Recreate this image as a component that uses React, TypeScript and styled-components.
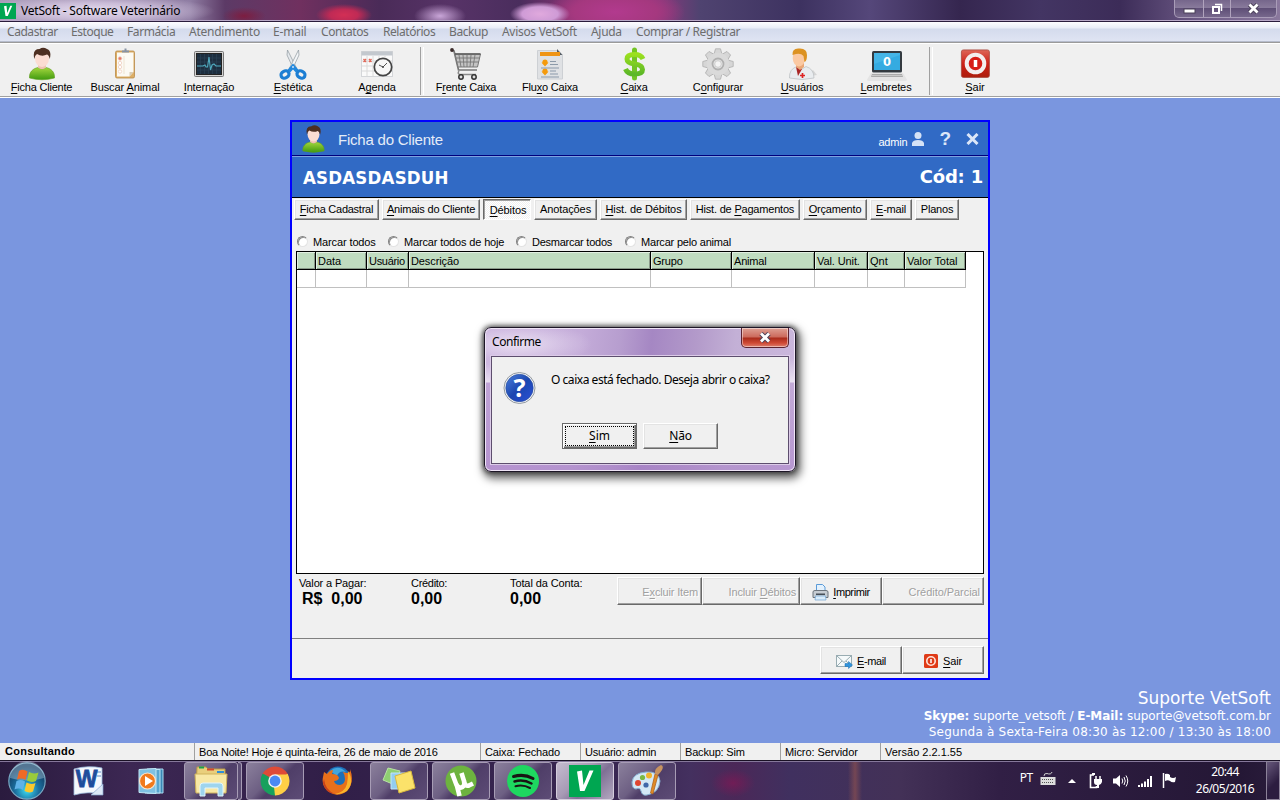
import React from 'react';
import styled, { createGlobalStyle, css } from 'styled-components';

const Global = createGlobalStyle`
  * { box-sizing: border-box; }
  html, body { margin: 0; padding: 0; }
  body { width: 1280px; height: 800px; overflow: hidden; font-family: "Liberation Sans", sans-serif; font-size: 11px; color: #000; }
  u { text-decoration: underline; text-underline-offset: 1.5px; text-decoration-thickness: 1px; text-decoration-skip-ink: none; }
  svg { display: block; flex: none; }
`;

const segoe = '"Noto Sans", "Open Sans", sans-serif';
const verdana = '"DejaVu Sans", sans-serif';

const Screen = styled.div`
  width: 1280px; height: 800px; display: flex; flex-direction: column; overflow: hidden; background: #7a96df;
`;

const Text = styled.span<{ $ls?: number }>`
  white-space: pre; letter-spacing: ${p => p.$ls ?? 0}px;
`;

/* "&" marks the letter that is the keyboard accelerator */
const Label = ({ text, ls }: { text: string; ls?: number }) => {
  const i = text.indexOf('&');
  if (i < 0) return <Text $ls={ls}>{text}</Text>;
  return <Text $ls={ls}>{text.slice(0, i)}<u>{text[i + 1]}</u>{text.slice(i + 2)}</Text>;
};

/* ---------- title bar ---------- */
const TitleBar = styled.header`
  height: 22px; flex: none; display: flex; align-items: flex-start; justify-content: space-between;
  border-bottom: 1px solid #2a1c3c; box-shadow: inset 0 -1px 0 #b9a9c8;
  font-family: ${segoe}; font-size: 12px; line-height: 22px;
  background:
    radial-gradient(ellipse 120px 16px at 95px 11px, rgba(236,228,244,.92) 0, rgba(214,200,226,.8) 50%, transparent 100%),
    radial-gradient(ellipse 26px 12px at 440px 16px, #c9a6d8 0, transparent 100%),
    radial-gradient(ellipse 22px 9px at 244px 16px, #7d1d40 0, transparent 100%),
    radial-gradient(ellipse 28px 11px at 344px 15px, #d32f55 0, #c02a55 50%, transparent 100%),
    radial-gradient(ellipse 30px 12px at 540px 14px, #e0a9dd 0, #cf9bd6 60%, transparent 100%),
    radial-gradient(ellipse 70px 26px at 615px 12px, #b23a8e 0, #a5387f 60%, transparent 100%),
    linear-gradient(90deg, #a99bb8 0, #8f7da3 190px, #5c3a66 225px, #70305f 300px, #4a2b58 380px, #573367 450px, #4a2d5d 520px, #8e3478 580px, #92367e 650px, #4f4370 700px, #3d3260 800px, #55477a 870px, #35264f 960px, #433563 1040px, #3c2c58 1120px, #6d5a86 1200px, #8a789d 1280px);
`;
const AppName = styled.div`
  display: flex; align-items: flex-start; gap: 5px; padding-top: 0;
  svg { margin-top: 3px; }
`;
const Caption = styled.div`
  display: flex; width: 103px; height: 18px; margin-right: 3px; border: 1px solid #a99cb8; border-top: 0;
  border-radius: 0 0 5px 5px; background: linear-gradient(#75668b, #887a9b 45%, #5f4f77 50%, #76678c);
`;
const CaptionBtn = styled.div<{ $w: number }>`
  width: ${p => p.$w}px; display: flex; justify-content: center; align-items: center;
  & + & { border-left: 1px solid #b0a3bd; }
`;
const VLogo = ({ size }: { size: number }) => (
  <svg width={size} height={size} viewBox="0 0 32 32">
    <rect width="32" height="32" fill="#00a651" />
    <path d="M8 6.500L13 5.500L14.500 20L20.500 5.500H24.500L15.500 26H11Z" fill="#fff" />
  </svg>
);

/* ---------- menu ---------- */
const MenuBar = styled.nav`
  height: 20px; flex: none; display: flex; padding-left: 7px; border-bottom: 1px solid #b6bccc;
  background: linear-gradient(#fdfdff 0, #e9edf7 6px, #d4dbed 7px, #dfe4f3 19px);
  font-family: ${segoe}; font-size: 12px; line-height: 20px; color: #6d6d6d;
`;
const MenuItem = styled.div<{ $w: number }>`width: ${p => p.$w}px; flex: none;`;
const menu: [string, number, number][] = [
  ['Cadastrar', 64, -0.45], ['Estoque', 56, -0.45], ['Farmácia', 62, -0.4], ['Atendimento', 84, -0.25], ['E-mail', 48, -0.2],
  ['Contatos', 62, -0.4], ['Relatórios', 66, -0.45], ['Backup', 53, -0.4], ['Avisos VetSoft', 89, -0.3], ['Ajuda', 45, -0.3],
  ['Comprar / Registrar', 130, -0.4],
];

/* ---------- toolbar ---------- */
const Toolbar = styled.div`
  height: 56px; flex: none; display: flex; margin-left: 0; padding: 0;
  border-top: 1px solid #9a9a9a; border-bottom: 1px solid #fff;
  box-shadow: inset 0 1px 0 #fff, inset 0 -1px 0 #a0a0a0; background: #f0f0f0;
`;
const Tool = styled.button<{ $first?: boolean }>`
  width: ${p => (p.$first ? 83 : 84)}px; flex: none; border: 0; background: none; padding: 4px 0 0;
  display: flex; flex-direction: column; align-items: center; font: 11px "Liberation Sans", sans-serif; color: #000;
  svg { height: 34px; }
  span { line-height: 14px; margin-top: -1px; }
`;
const ToolSep = styled.div`
  width: 5px; flex: none; margin: 4px 0 2px; display: flex; justify-content: flex-end;
  &::before { content: ""; width: 2px; border-left: 1px solid #a0a0a0; border-right: 1px solid #fff; }
`;

const Person = ({ w = 34, h = 34 }: { w?: number; h?: number }) => (
  <svg width={w} height={h} viewBox="0 0 34 34">
    <defs><linearGradient id="shirt" x2="0" y2="1"><stop stopColor="#a4d63e" /><stop offset="1" stopColor="#3f9a0f" /></linearGradient></defs>
    <path d="M4.500 31C4 25 8 21.500 13 20.500L17 22L21 20.500C26 21.500 30 25 29.500 31Q17 34.500 4.500 31Z" fill="url(#shirt)" stroke="#5f9e1f" strokeWidth=".6" />
    <path d="M13 16H21V20.500Q17 24 13 20.500Z" fill="#eec3b4" />
    <ellipse cx="17" cy="11.500" rx="7" ry="8.500" fill="#fbdcd2" />
    <path d="M9.300 12Q7 2 14.500 2Q18-.5 22 2Q27 4 24.700 12Q24 8 22 7.500Q17 10 12 7Q10 8 9.300 12Z" fill="#4d2f22" />
  </svg>
);
const Clipboard = () => (
  <svg width="34" height="34" viewBox="0 0 34 34">
    <rect x="7.500" y="4" width="19" height="27" rx="1.500" fill="#dcae66" stroke="#b98a48" strokeWidth=".8" />
    <path d="M9 5.500H25.500V25L21.500 29.500H9Z" fill="#fcfaf4" />
    <path d="M21.500 29.500V25H25.500Z" fill="#d9cdb5" />
    <path d="M14 5.500V3.500H16.500V1.500H18.500V3.500H21V5.500Z" fill="#8893a4" />
    <g fill="#fff" stroke="#efcfc0" strokeWidth=".8"><circle cx="12" cy="11.500" r="1.800" fill="#e77868" /><circle cx="12" cy="16" r="1.700" /><circle cx="12" cy="20" r="1.700" /><circle cx="12" cy="24.500" r="1.700" /></g>
    <path d="M16 9V27" stroke="#eee4d2" />
  </svg>
);
const Monitor = () => (
  <svg width="34" height="34" viewBox="0 0 34 34">
    <rect x="2.500" y="4.500" width="29" height="25" rx="1" fill="#d4d4d4" stroke="#777" />
    <rect x="4.500" y="6.500" width="25" height="21" fill="#1d2e3f" stroke="#222" />
    <path d="M8.500 7V27M12.500 7V27M16.500 7V27M20.500 7V27M24.500 7V27M5 11H29M5 15H29M5 19H29M5 23H29" stroke="#2c4459" strokeWidth=".6" />
    <path d="M5 19H11L13 18L14 20H15.500L17 10L18.500 23L20 18L22 17L24 19H29" fill="none" stroke="#4fa9bd" strokeWidth="1.100" />
  </svg>
);
const Scissors = () => (
  <svg width="34" height="34" viewBox="0 0 34 34">
    <path d="M11.500 3L20.500 21L17.500 22L11 8Z" fill="#e5e9ed" stroke="#8d969e" strokeWidth=".7" />
    <path d="M22.500 3L13.500 21L16.500 22L23 8Z" fill="#f4f6f8" stroke="#8d969e" strokeWidth=".7" />
    <path d="M13 24L17 19.500L21 24" fill="none" stroke="#2288dd" strokeWidth="4" />
    <g fill="none" stroke="#1c7ed3" strokeWidth="3.200"><ellipse cx="9" cy="27.500" rx="4.200" ry="3.400" transform="rotate(-30 9 27.500)" /><ellipse cx="25" cy="27.500" rx="4.200" ry="3.400" transform="rotate(30 25 27.500)" /></g>
    <circle cx="17" cy="20" r="1" fill="#cfe3f5" />
  </svg>
);
const Agenda = () => (
  <svg width="34" height="34" viewBox="0 0 34 34">
    <rect x="1.500" y="4.500" width="31" height="25" fill="#fafafa" stroke="#d4d6d9" />
    <rect x="1.500" y="4.500" width="31" height="4" fill="#c3c8ce" />
    <path d="M7 9V29M13 9V29M19 9V29M25 9V29M2 14H32M2 19H32M2 24H32" stroke="#dadada" />
    <path d="M3.500 12L6 15M6 12L3.500 15M9 12L11.500 15M11.500 12L9 15" stroke="#e06a5c" strokeWidth="1.300" />
    <circle cx="23" cy="20" r="8.700" fill="#f7f7f7" stroke="#444" strokeWidth="1.700" />
    <path d="M23 20L27 16M23 20L19 18" stroke="#555" strokeWidth="1" /><circle cx="23" cy="20" r="1" fill="#444" />
  </svg>
);
const Cart = () => (
  <svg width="34" height="34" viewBox="0 0 34 34">
    <path d="M2 3L5 4L9.500 23H28" fill="none" stroke="#777" strokeWidth="1.700" />
    <circle cx="3" cy="3" r="1.900" fill="#3b2c2c" />
    <path d="M6 7H31.500L28.500 20H9Z" fill="#c4c4c4" stroke="#777" />
    <path d="M10 8L12 20M14 8L15 20M18 8V20M22 8L21 20M26 8L24 20M7 11H31M8 15H30" stroke="#777" strokeWidth=".9" />
    <path d="M6 7H31.500" stroke="#555" strokeWidth="1.400" />
    <path d="M10 24Q8 27 11 27.500H27" fill="none" stroke="#8a8a8a" strokeWidth="1.500" />
    <g fill="#ddd" stroke="#333" strokeWidth="1.500"><circle cx="12" cy="30" r="2.200" /><circle cx="25" cy="30" r="2.200" /></g>
  </svg>
);
const Flow = () => (
  <svg width="34" height="34" viewBox="0 0 34 34">
    <path d="M4.500 3.500H25L29.500 8V32H4.500Z" fill="#dfe1e4" stroke="#cdd0d4" />
    <path d="M24 2L29.500 8H24Z" fill="#555c63" /><rect x="7" y="5" width="20" height="4" fill="#ef9414" />
    <g fill="#f59a0c"><circle cx="12" cy="15" r="2.600" /><path d="M8.500 15.500H15.500L12 19.500Z" /><circle cx="12" cy="24" r="2.600" /><path d="M8.500 24.500H15.500L12 28.500Z" /></g>
    <path d="M17 14.500H23M17 17.500H25M8 21H26M17 24H23M17 27H25M8 30H26" stroke="#8c9aa9" strokeWidth="1.200" />
  </svg>
);
const Dollar = () => (
  <svg width="34" height="34" viewBox="0 0 34 34">
    <defs><linearGradient id="money" x2="0" y2="1"><stop stopColor="#9be01f" /><stop offset="1" stopColor="#5cb727" /></linearGradient></defs>
    <path d="M17.500 3V31" stroke="#73c425" strokeWidth="5" strokeLinecap="round" />
    <path d="M26 12Q24 7.500 17.500 7.500Q10 7.500 10 12Q10 16 17.500 17Q25.500 18 25.500 22.500Q25.500 27 17.500 27Q10.500 27 8.500 22" fill="none" stroke="url(#money)" strokeWidth="5" />
  </svg>
);
const Gear = () => (
  <svg width="34" height="34" viewBox="0 0 34 34">
    <g fill="#d6d6d6" stroke="#adadad" strokeWidth=".8">
      {[0, 45, 90, 135, 180, 225, 270, 315].map(a => <path key={a} d="M12.800 8L14.500 1.800H19.500L21.200 8Z" transform={`rotate(${a} 17 17)`} />)}
    </g>
    <circle cx="17" cy="17" r="11.300" fill="#dadada" />
    <circle cx="17" cy="17" r="5.500" fill="#e6e6e6" stroke="#b0b0b0" strokeWidth="1.800" />
    <circle cx="17" cy="17" r="3.300" fill="#f4f4f4" stroke="#b5b5b5" strokeWidth=".6" />
  </svg>
);
const Doctor = () => (
  <svg width="34" height="34" viewBox="0 0 34 34">
    <path d="M20 30L32 28L28 23Z" fill="#d5d5d5" />
    <path d="M4.500 31Q4 22 12 19.500L17 22L21 19.500Q29 22 29 31Q17 34 4.500 31Z" fill="#e9ecef" stroke="#b7bbbf" strokeWidth=".7" />
    <path d="M11 20L13 29L17 22Z" fill="#a92626" />
    <path d="M11 15H19V20L15 23L11 20Z" fill="#eaa777" />
    <ellipse cx="14" cy="11" rx="6.300" ry="8.500" fill="#fbc9a2" />
    <path d="M7.500 8Q7 1 14 1.500Q22 1 22 8Q22 14 19.500 15L18.500 9Q16 6 11 7Z" fill="#dc9222" />
    <path d="M15 28.500H20M17.500 26V31" stroke="#d22" strokeWidth="1.700" />
  </svg>
);
const Laptop = () => (
  <svg width="42" height="34" viewBox="0 0 42 34">
    <rect x="7" y="4" width="30" height="21.500" rx="1.500" fill="#333a40" />
    <rect x="9" y="6" width="26" height="17" fill="#45b5e6" />
    <path d="M9 23V17L35 8V23Z" fill="#219fdb" opacity=".45" />
    <path d="M6 26H38L42 32.500Q42 34 40 34H4Q2 34 2 32.500Z" fill="#e4e4e4" /><path d="M7 27H37L38 30H6Z" fill="#aaa" /><path d="M7 28.500H37.500" stroke="#ddd" strokeWidth=".6" />
    <text x="22" y="18.500" textAnchor="middle" fontFamily="DejaVu Sans" fontWeight="700" fontSize="11.500" fill="#fff">0</text>
  </svg>
);
const Power = () => (
  <svg width="34" height="34" viewBox="0 0 34 34">
    <defs><linearGradient id="pw" x2="0" y2="1"><stop stopColor="#de6658" /><stop offset=".5" stopColor="#cc2118" /><stop offset="1" stopColor="#ad1c0c" /></linearGradient></defs>
    <rect x="3.400" y="2.900" width="28" height="27.500" rx="2" fill="url(#pw)" stroke="#a8453b" strokeWidth=".8" />
    <circle cx="17.500" cy="16.500" r="8.800" fill="#d71c16" stroke="#f3eeee" strokeWidth="4" />
    <path d="M17.500 13V20" stroke="#fff" strokeWidth="3.500" />
  </svg>
);
type ToolDef = [string, React.ReactNode, number];
const tools: ToolDef[][] = [
  [['&Ficha Cliente', <Person />, -0.22], ['Buscar &Animal', <Clipboard />, -0.1], ['&Internação', <Monitor />, -0.15], ['&Estética', <Scissors />, -0.05], ['A&genda', <Agenda />, -0.1]],
  [['F&rente Caixa', <Cart />, -0.2], ['Flu&xo Caixa', <Flow />, -0.2], ['&Caixa', <Dollar />, -0.2], ['C&onfigurar', <Gear />, -0.1], ['&Usuários', <Doctor />, -0.1], ['&Lembretes', <Laptop />, -0.1]],
  [['&Sair', <Power />, 0]],
];

/* ---------- desktop area ---------- */
const Desktop = styled.main`
  height: 645px; flex: none; display: flex; flex-direction: column; align-items: center; padding-top: 22px; background: #7a96df;
`;
const Window = styled.section`
  width: 700px; height: 560px; flex: none; border: 2px solid #0000ff; background: #f0f0f0; display: flex; flex-direction: column;
`;
const WinHead = styled.div`
  height: 35px; flex: none; display: flex; align-items: center; padding: 0 9px 0 7px; background: #316ac5; color: #e4ecf8;
  border-bottom: 1px solid #7ea2e0; box-shadow: inset 0 -1px 0 #00007c;
`;
const WinTitle = styled.div`flex: 1; padding: 1px 0 0 10px; font-size: 15px;`;
const UserTag = styled.div`
  display: flex; align-items: center; gap: 5px; color: #fff; font-size: 11px; margin-right: 15px;
  span { padding-top: 5px; }
`;
const HeadGlyph = styled.div<{ $gap: number }>`margin-right: ${p => p.$gap}px; font: bold 19px "Liberation Sans", sans-serif; color: #dbe6f8;`;
const NameBar = styled.div`
  height: 41px; flex: none; display: flex; justify-content: space-between; padding: 0 5px 0 11px; background: #316ac5; color: #fff;
  border-bottom: 1px solid #000; font: bold 18px/40px ${verdana};
`;
const ClientName = styled.div`font-family: "DejaVu Sans Condensed", "DejaVu Sans", sans-serif; font-stretch: condensed; font-size: 18.5px; padding-top: 1px;`;
const raised = css`
  border: 1px solid; border-color: #fff #696969 #696969 #fff; box-shadow: inset -1px -1px 0 #a0a0a0, inset 1px 1px 0 #e3e3e3; background: #f0f0f0;
`;
const Tabs = styled.div`display: flex; height: 24px; flex: none; padding: 1px 0 0 2px; gap: 3px;`;
const Tab = styled.button<{ $w: number; $on?: boolean }>`
  width: ${p => p.$w}px; height: 21px; padding: 0; font: 11px/17px "Liberation Sans", sans-serif; color: #000; text-align: center; ${raised}
  ${p => p.$on && css`border-color: #696969 #fff #fff #696969; box-shadow: inset 1px 1px 0 #a0a0a0; background: repeating-conic-gradient(#fff 0 25%, #f0f0f0 0 50%) 0 0 / 2px 2px; padding: 2px 0 0 2px;`}
`;
const tabs: [string, number, number, boolean?][] = [
  ['&Ficha Cadastral', 85, -0.25], ['&Animais do Cliente', 98, -0.2], ['&Débitos', 48, -0.1, true], ['Anotações', 63, -0.1], ['&Hist. de Débitos', 87, -0.1],
  ['Hist. de &Pagamentos', 110, -0.2], ['&Orçamento', 64, -0.2], ['&E-mail', 42, -0.2], ['Planos', 44, -0.2],
];
const Radios = styled.div`display: flex; height: 29px; flex: none; padding: 9px 0 0 5px; line-height: 22px;`;
const Radio = styled.label<{ $w: number }>`display: flex; align-items: center; gap: 5px; width: ${p => p.$w}px; flex: none; height: 22px;`;
const Dot = styled.i`
  width: 11px; height: 11px; margin-bottom: 1px; border-radius: 50%; background: #fff; border: 1px solid; border-color: #808080 #e3e3e3 #e3e3e3 #808080; box-shadow: inset 1px 1px 0 #8f8f8f;
`;
const GridBox = styled.div`
  width: 688px; height: 323px; flex: none; margin-left: 4px; border: 1px solid #000; background: #fff; display: flex; flex-direction: column;
`;
const GridRow = styled.div`display: flex;`;
const Th = styled.div<{ $w: number }>`
  width: ${p => p.$w}px; height: 18px; padding-left: 2px; background: #c0dcc0; border-right: 1px solid #000; border-bottom: 1px solid #000;
  box-shadow: inset 1px 1px 0 #e2efe2, inset -1px -1px 0 #8a9a8a; line-height: 18px; overflow: hidden; white-space: nowrap;
`;
const Td = styled.div<{ $w: number }>`width: ${p => p.$w}px; height: 18px; border-right: 1px solid #c0c0c0; border-bottom: 1px solid #c0c0c0;`;
const cols: [string, number, number][] = [
  ['', 19, 0], ['Data', 51, 0], ['Usuário', 42, -0.3], ['Descrição', 242, -0.1], ['Grupo', 81, -0.2], ['Animal', 83, -0.2], ['Val. Unit.', 53, -0.1], ['Qnt', 37, 0], ['Valor Total', 61, -0.05],
];
const Totals = styled.div`display: flex; height: 65px; flex: none; padding: 3px 4px 0 7px; border-bottom: 1px solid #808080;`;
const Total = styled.div<{ $w: number }>`
  width: ${p => p.$w}px; display: flex; flex-direction: column; line-height: 12px;
  b { font-size: 16px; line-height: 20px; white-space: pre; }
`;
const Currency = styled.b`padding-left: 3px;`;
const Actions = styled.div`display: flex; justify-content: flex-end; `;
const Action = styled.button<{ $w: number; $off?: boolean; $align?: string; $gap?: number }>`
  width: ${p => p.$w}px; height: 28px; flex: none; display: flex; align-items: center; justify-content: ${p => p.$align ?? 'center'}; gap: ${p => p.$gap ?? 4}px;
  padding: 2px 3px 0; font: 11px "Liberation Sans", sans-serif; ${raised} color: ${p => (p.$off ? '#a0a0a0' : '#000')};
  ${p => p.$off && 'text-shadow: 1px 1px 0 #fff;'}
`;
const Footer = styled.div`display: flex; justify-content: flex-end; padding: 7px 4px 0 0;`;

const Support = styled.aside`
  align-self: stretch; text-align: right; color: #fff; font: 12px/16px ${verdana}; padding: 8px 9px 0 0; 
  p { margin: 0; }
  p:first-child { font-size: 17px; line-height: 20px; }
`;

/* ---------- confirmation dialog ---------- */
const Dialog = styled.div`
  position: absolute; left: 484px; top: 327px; width: 312px; height: 145px; border: 1px solid #1d1626; border-radius: 7px; padding: 0 7px 7px;
  display: flex; flex-direction: column; box-shadow: 2px 4px 9px 3px rgba(0,0,0,.55), 0 0 5px 1px rgba(0,0,0,.6), inset 0 0 0 1px #efe4f6;
  background:
    radial-gradient(ellipse 75px 22px at 32px 16px, rgba(240,232,246,.85), transparent),
    linear-gradient(transparent 30px, rgba(255,255,255,.6) 54px, rgba(180,145,205,.35) 55px, rgba(170,130,200,.6) 100%),
    linear-gradient(95deg, #c6addb 0, #c4acd9 30%, #b79ecf 42%, #a587c3 52%, #b39aca 66%, #c3b0d6 78%, #cbb8dd 100%);
`;
const DlgTitle = styled.div`
  height: 28px; flex: none; display: flex; justify-content: space-between; font: 12px/28px ${segoe};
`;
const DlgClose = styled.div`
  width: 48px; height: 20px; margin: 0 -1px 0 0; border: 1px solid #5b2430; border-top: 0; border-radius: 0 0 5px 5px; display: flex; align-items: center; justify-content: center;
  box-shadow: inset 0 0 0 1px rgba(255,255,255,.45); background: linear-gradient(#dea094 0, #cc6a5c 9px, #a92c1c 10px, #cf4934 15px, #dd8070 100%);
`;
const DlgBody = styled.div`
  flex: 1; border: 1px solid #5d4e6e; outline: 1px solid #dccbe8; background: #f0f0f0; display: flex; flex-direction: column; margin: 0 -1px 0 -1px;
  font: 12px ${segoe};
`;
const Message = styled.div`
  display: flex; height: 66px; padding: 14px 0 0 11px; gap: 15px;
  & > span { line-height: 20px; margin-top: -1px; }
`;
const DlgButtons = styled.div`display: flex; gap: 6px; padding-left: 70px;`;
const DlgButton = styled.button<{ $def?: boolean }>`
  width: 75px; height: 26px; padding: 0; font: 12px/20px ${segoe}; display: flex; align-items: center; justify-content: center; ${raised}
  ${p => p.$def && css`border-color: #696969; box-shadow: inset 1px 1px 0 #fff, inset -1px -1px 0 #696969, inset -2px -2px 0 #a0a0a0; & > span { border: 1px dotted #000; width: 69px; height: 20px; line-height: 18px; }`}
`;

/* ---------- status bar ---------- */
const Status = styled.footer`height: 17px; flex: none; display: flex; background: #f0f0f0; line-height: 18px;`;
const Pane = styled.div<{ $w: number; $bold?: boolean }>`
  width: ${p => p.$w}px; padding-left: ${p => (p.$bold ? 5 : 4)}px; flex: none; font-weight: ${p => (p.$bold ? 700 : 400)}; 
  line-height: ${p => (p.$bold ? 16 : 18)}px;
  & + & { border-left: 1px solid #a0a0a0; }
`;
const panes: [string, number, number][] = [
  ['Consultando', 194, 0.25], ['Boa Noite! Hoje é quinta-feira, 26 de maio de 2016', 286, -0.18], ['Caixa: Fechado', 100, -0.15], ['Usuário: admin', 100, -0.2],
  ['Backup: Sim', 100, -0.18], ['Micro: Servidor', 100, -0.08], ['Versão 2.2.1.55', 400, 0],
];

/* ---------- taskbar ---------- */
const Taskbar = styled.div`
  height: 40px; flex: none; display: flex; border-top: 1px solid #1a1125; box-shadow: inset 0 1px 0 #85779a; color: #fff; font-family: ${segoe};
  background:
    radial-gradient(ellipse 22px 14px at 733px 22px, rgba(125,25,85,.75), transparent),
    linear-gradient(90deg, transparent 848px, rgba(150,85,80,.6) 855px, transparent 862px),
    linear-gradient(90deg, #2a1b3e 0, #3c2753 130px, #311f48 330px, #3a2753 640px, #44305f 690px, #4b2858 735px, #40305f 790px, #433157 900px, #311f45 1000px, #241735 1240px, #2a1c3b 1280px);
`;
const Task = styled.div<{ $w: number; $open?: boolean; $active?: boolean }>`
  width: ${p => p.$w}px; height: 38px; margin: 1px 4px 0 0; flex: none; display: flex; align-items: center; justify-content: center; border-radius: 3px;
  ${p => p.$open && css`border: 1px solid #a79cb5; background: linear-gradient(135deg, #8b809c 0, #6d5f83 42%, #4f3e68 55%, #5d4c76 100%);`}
  ${p => p.$active && css`border-color: #d5cddd; background: linear-gradient(135deg, #c5bccf 0, #a79ab5 40%, #7f7095 60%, #b3a8c0 100%);`}
`;
const Stack = styled.div`width: 4px; height: 38px; margin: 1px 4px 0 -4px; flex: none; border: 1px solid #a79cb5; border-left: 0; border-radius: 0 3px 3px 0; background: #5c4d74;`;
const Tray = styled.div`margin-left: auto; display: flex; align-items: center; flex: none;`;
const Lang = styled.div`font-size: 12px; line-height: 14px; margin: 0 7px 6px 0;`;
const TrayIcon = styled.div<{ $gap: number; $lift?: number }>`margin: 0 ${p => p.$gap}px ${p => p.$lift ?? 0}px 0;`;
const Clock = styled.div`width: 62px; margin-right: 10px; text-align: center; font-size: 12px; line-height: 17px; padding-bottom: 1px;`;
const Peek = styled.div`width: 14px; height: 39px; border: 1px solid #8c8299; background: linear-gradient(135deg, #67587b, #2c1d40 60%);`;

const Orb = () => (
  <svg width="40" height="40" viewBox="0 0 40 40">
    <defs><radialGradient id="orb" cx=".5" cy=".75" r=".65"><stop stopColor="#3fe0f5" /><stop offset=".5" stopColor="#1b6f9f" /><stop offset="1" stopColor="#12395f" /></radialGradient></defs>
    <circle cx="20" cy="20" r="18.200" fill="url(#orb)" stroke="#79a9c4" strokeWidth="1.200" />
    <path d="M3 17A17 17 0 0 1 37 17Q20 22 3 17Z" fill="#b9d3e2" opacity=".4" />
    <path d="M12 10Q16 7.500 20.500 10.500L18.500 19Q14.500 16.500 10 18.500Z" fill="#ee6a26" />
    <path d="M22 11Q26.500 13.500 31.500 11.500L29 20Q24.500 22 20 19.500Z" fill="#9bcb3a" />
    <path d="M9.500 20Q14 18 18 20.500L16 29Q12 26.500 7.500 28.500Z" fill="#5fb2e8" />
    <path d="M19.500 21.500Q24 24 28.500 22L26 30.500Q22 32.500 17.500 30Z" fill="#fbc82c" />
  </svg>
);
const Word = () => (
  <svg width="32" height="32" viewBox="0 0 32 32">
    <path d="M2 4Q16 0 30 3V29Q16 26 2 30Z" fill="#f4f8fd" stroke="#9dbbdd" strokeWidth=".8" />
    <path d="M25 7H29M25 11H29" stroke="#5d89c4" />
    <text x="14.500" y="22" textAnchor="middle" fontFamily="Liberation Sans" fontWeight="700" fontSize="23" fill="#1d4d9c" stroke="#1d4d9c" strokeWidth=".8">W</text>
    <path d="M19 30L31 19V30Z" fill="#dce9f7" stroke="#87a8cf" strokeWidth=".7" />
  </svg>
);
const Media = () => (
  <svg width="32" height="32" viewBox="0 0 32 32">
    <path d="M12 4H28V28H12Z" fill="#3a87b5" stroke="#a9dbf1" /><path d="M10 4.500H25V28H10Z" fill="#57a5cf" stroke="#bce5f6" />
    <path d="M4 4.500L21 3.500V28.500L4 27.500Z" fill="#7fc1e2" stroke="#c3e8f6" />
    <circle cx="12.500" cy="16" r="8" fill="#f17a1c" stroke="#fbe5cf" strokeWidth="1.200" /><path d="M10 11L18 16L10 21Z" fill="#fff" />
  </svg>
);
const Explorer = () => (
  <svg width="36" height="34" viewBox="0 0 36 34">
    <path d="M4 3H13L15 5H32V28H3Z" fill="#e9cf7c" stroke="#b99a49" /><path d="M6 3.500H11" stroke="#1ca24c" strokeWidth="2" /><path d="M14 5.500H21" stroke="#d44b2b" strokeWidth="2" /><path d="M24 8H31" stroke="#2f8fd8" strokeWidth="2" />
    <path d="M2 10H34L33 29H3Z" fill="#f8e8a5" stroke="#cfb25c" />
    <path d="M7 32V22Q7 19 10 19H27Q30 19 30 22V32H25V24H12V32Z" fill="#9fd5ee" stroke="#e2f5fc" />
  </svg>
);
const Chrome = () => (
  <svg width="30" height="30" viewBox="0 0 30 30">
    <path d="M15 15L2.500 7.800A14.500 14.500 0 0 1 27.600 7.800Z" fill="#df4b37" /><path d="M15 15L2.500 7.800A14.500 14.500 0 0 0 15 29.500Z" fill="#17a05d" /><path d="M15 15L27.600 7.800A14.500 14.500 0 0 1 15 29.500Z" fill="#ffcf45" />
    <path d="M15 8.500H28L21 19Z" fill="#ffcf45" /><path d="M9.500 18.500L2.700 7.500L9 11Z" fill="#17a05d" /><path d="M15 29.500L21 18L14 21Z" fill="#ffcf45" />
    <circle cx="15" cy="15" r="6.800" fill="#f2f2f2" /><circle cx="15" cy="15" r="5.400" fill="#4a89f3" />
  </svg>
);
const Firefox = () => (
  <svg width="32" height="32" viewBox="0 0 32 32">
    <circle cx="17" cy="14" r="12.500" fill="#1d6fb8" /><path d="M9 6Q17-1 25 7Q18 5 16 11Z" fill="#43a6dd" />
    <path d="M3 7L6 9Q9 5 12 5L11 9Q17 9 18 13Q17 16 13 16Q14 20 19 20Q24 19 24 14Q24 10 22 7Q30 10 29 4Q34 17 26 26Q17 33 8 27Q0 21 2 12Z" fill="#e8701a" />
    <path d="M27 6Q34 17 26 26Q20 30 14 29Q24 27 26 19Q27 14 27 6Z" fill="#fbb52a" /><path d="M3 14Q4 25 14 29Q4 28 2 18Z" fill="#c5401b" />
  </svg>
);
const Notes = () => (
  <svg width="36" height="32" viewBox="0 0 36 32">
    <path d="M7 3L19 6L14 20L2 15Z" fill="#8fcf72" stroke="#b9e3a5" /><path d="M10 8L24 8V24H10Z" fill="#93cdf1" stroke="#c3e5f8" /><path d="M14 11L30 6L34 23L18 28Z" fill="#fbe26a" stroke="#d9b93e" />
  </svg>
);
const UTorrent = () => (
  <svg width="32" height="32" viewBox="0 0 32 32">
    <circle cx="16" cy="16" r="15.500" fill="#6db33f" />
    <path d="M7 8L11.500 20Q14 24 17.500 22Q20 20.500 19 16L16.500 8M19 16Q20 22 24 20.500L28 18.500M11.500 19L14.500 31" fill="none" stroke="#fff" strokeWidth="4.600" />
  </svg>
);
const Spotify = () => (
  <svg width="32" height="32" viewBox="0 0 32 32">
    <circle cx="16" cy="16" r="16" fill="#1ed760" />
    <g fill="none" stroke="#191414" strokeLinecap="round"><path d="M6.500 11.500Q17 8.500 26 13.500" strokeWidth="3" /><path d="M7.500 16.500Q16.500 14 24.500 18.500" strokeWidth="2.500" /><path d="M8.500 21.300Q16 19.300 23 23" strokeWidth="2" /></g>
  </svg>
);
const Paint = () => (
  <svg width="34" height="34" viewBox="0 0 34 34">
    <path d="M2 18Q3 9 16 8Q29 7 30 17Q29 29 17 31Q12 32 11 27Q10 23 6 25Q2 25 2 18Z" fill="#d4e8f5" stroke="#86afd0" />
    <circle cx="8" cy="19" r="3" fill="#df4630" /><circle cx="12.500" cy="13.500" r="2.600" fill="#79b943" /><circle cx="19" cy="11.500" r="3" fill="#f2b42c" /><circle cx="16" cy="21" r="2.600" fill="#3f67a8" />
    <path d="M28 11L23 30L20.500 29L25 10Z" fill="#e08b26" stroke="#a85a16" strokeWidth=".7" /><path d="M25 10Q24 4 31 1Q34 2 32 6Q30 9 28 11Z" fill="#c79360" />
  </svg>
);

const WhiteX = ({ w = 13, h = 11 }: { w?: number; h?: number }) => (
  <svg width={w} height={h} viewBox="0 0 13 11">
    <path d="M2.500 1.500L10.500 9.500M10.500 1.500L2.500 9.500" stroke="#4a4058" strokeWidth="4.600" /><path d="M2.500 1.500L10.500 9.500M10.500 1.500L2.500 9.500" stroke="#fff" strokeWidth="2.800" />
  </svg>
);

export default function App() {
  return (
    <Screen>
      <Global />
      <TitleBar>
        <AppName><VLogo size={16} /><Text $ls={-0.22}>VetSoft - Software Veterinário</Text></AppName>
        <Caption>
          <CaptionBtn $w={28}><svg width="13" height="12"><rect x="1" y="6" width="11" height="4" fill="#fff" stroke="#4a4058" /></svg></CaptionBtn>
          <CaptionBtn $w={27}><svg width="12" height="12"><path d="M4 1.500H10.500V8" fill="none" stroke="#fff" strokeWidth="1.500" /><rect x="2" y="4" width="6" height="6" fill="none" stroke="#fff" strokeWidth="2" /></svg></CaptionBtn>
          <CaptionBtn $w={46}><WhiteX /></CaptionBtn>
        </Caption>
      </TitleBar>
      <MenuBar>{menu.map(([t, w, ls]) => <MenuItem key={t} $w={w}><Text $ls={ls}>{t}</Text></MenuItem>)}</MenuBar>
      <Toolbar>
        {tools.map((group, g) => (
          <React.Fragment key={g}>
            {g > 0 && <ToolSep />}
            {group.map(([t, icon, ls], i) => <Tool key={t} $first={g === 0 && i === 0}>{icon}<Label text={t} ls={ls} /></Tool>)}
          </React.Fragment>
        ))}
      </Toolbar>
      <Desktop>
        <Window>
          <WinHead>
            <Person w={29} h={30} />
            <WinTitle><Text $ls={-0.22}>Ficha do Cliente</Text></WinTitle>
            <UserTag><Text $ls={-0.2}>admin</Text><svg width="12" height="14"><circle cx="6" cy="3.500" r="3.500" fill="#d5e2f6" /><path d="M0 14V11Q1 8 6 8Q11 8 12 11V14Z" fill="#d5e2f6" /></svg></UserTag>
            <HeadGlyph $gap={15}>?</HeadGlyph>
            <svg width="13" height="12"><path d="M1.500 1L11.500 11M11.500 1L1.500 11" stroke="#dbe6f8" strokeWidth="3" /></svg>
          </WinHead>
          <NameBar><ClientName><Text $ls={0.2}>ASDASDASDUH</Text></ClientName><Text $ls={-0.2}>Cód: 1</Text></NameBar>
          <Tabs>{tabs.map(([t, w, ls, on]) => <Tab key={t} $w={w} $on={on}><Label text={t} ls={ls} /></Tab>)}</Tabs>
          <Radios>
            <Radio $w={91}><Dot /><Text $ls={-0.12}>Marcar todos</Text></Radio>
            <Radio $w={128}><Dot /><Text $ls={-0.15}>Marcar todos de hoje</Text></Radio>
            <Radio $w={109}><Dot /><Text $ls={-0.25}>Desmarcar todos</Text></Radio>
            <Radio $w={120}><Dot /><Text $ls={-0.2}>Marcar pelo animal</Text></Radio>
          </Radios>
          <GridBox>
            <GridRow>{cols.map(([t, w, ls], i) => <Th key={i} $w={w}><Text $ls={ls}>{t}</Text></Th>)}</GridRow>
            <GridRow>{cols.map(([, w], i) => <Td key={i} $w={w} />)}</GridRow>
          </GridBox>
          <Totals>
            <Total $w={112}><Text $ls={-0.15}>Valor a Pagar:</Text><Currency>R$  0,00</Currency></Total>
            <Total $w={99}><Text $ls={-0.3}>Crédito:</Text><b>0,00</b></Total>
            <Total $w={107}><Text $ls={-0.1}>Total da Conta:</Text><b>0,00</b></Total>
            <Actions>
              <Action $w={85} $off $align="flex-end"><Label text="E&xcluir Item" ls={-0.15} /></Action>
              <Action $w={98} $off $align="flex-end"><Label text="Incluir &Débitos" ls={-0.15} /></Action>
              <Action $w={82}>
                <svg width="17" height="17" viewBox="0 0 17 17"><path d="M4.500 7V.5H10.500L13 3V7" fill="#e3f1fd" stroke="#5a9bd8" /><path d="M1 8Q1 6.500 3 6.500H14Q16 6.500 16 8V13.500H1Z" fill="#c6ccd2" stroke="#6d757d" /><path d="M4 9.500H13V11H4Z" fill="#464f58" /><path d="M3.500 12H13.500L14 16H3Z" fill="#d9ecfb" stroke="#71a5d1" strokeWidth=".7" /></svg>
                <Label text="&Imprimir" ls={-0.4} />
              </Action>
              <Action $w={102} $off $align="flex-end"><Label text="Crédito/Parcial" ls={-0.05} /></Action>
            </Actions>
          </Totals>
          <Footer>
            <Action $w={82}>
              <svg width="17" height="15" viewBox="0 0 17 15"><rect x=".5" y="1.500" width="15" height="11" fill="#f5f9fa" stroke="#99acb2" /><path d="M1 2L8 8.500L15 2M1 12L6 7M15 12L10 7" fill="none" stroke="#99acb2" /><path d="M9 9.500H12.500V7.500L16.500 11L12.500 14.500V12.500H9Z" fill="#3194dd" stroke="#176cb0" strokeWidth=".5" /></svg>
              <Label text="&E-mail" ls={-0.4} />
            </Action>
            <Action $w={82} $gap={5}>
              <svg width="14" height="14" viewBox="0 0 14 14"><rect width="14" height="14" rx="1.500" fill="#df3a17" /><circle cx="7" cy="7" r="4.200" fill="none" stroke="#ffe5dc" strokeWidth="1.600" /><path d="M7 5V9" stroke="#fff" strokeWidth="1.500" /></svg>
              <Label text="&Sair" ls={-0.2} />
            </Action>
          </Footer>
        </Window>
        <Support>
          <p><Text>Suporte VetSoft</Text></p>
          <p><Text $ls={-0.05}><b>Skype:</b> suporte_vetsoft / <b>E-Mail:</b> suporte@vetsoft.com.br</Text></p>
          <p><Text $ls={0.2}>Segunda à Sexta-Feira 08:30 às 12:00 / 13:30 às 18:00</Text></p>
        </Support>
      </Desktop>
      <Status>{panes.map(([t, w, ls], i) => <Pane key={t} $w={w} $bold={i === 0}><Text $ls={ls}>{t}</Text></Pane>)}</Status>
      <Taskbar>
        <Task $w={54}><Orb /></Task>
        <Task $w={60}><Word /></Task>
        <Task $w={58}><Media /></Task>
        <Task $w={54} $open><Explorer /></Task>
        <Stack />
        <Task $w={58} $open><Chrome /></Task>
        <Task $w={58}><Firefox /></Task>
        <Task $w={58} $open><Notes /></Task>
        <Task $w={58} $open><UTorrent /></Task>
        <Task $w={58} $open><Spotify /></Task>
        <Task $w={58} $open $active><VLogo size={32} /></Task>
        <Task $w={58} $open><Paint /></Task>
        <Tray>
          <Lang><Text $ls={-0.3}>PT</Text></Lang>
          <TrayIcon $gap={12} $lift={5}><svg width="16" height="15"><path d="M4 5Q4 2 7 2.500Q11 4 12 1" fill="none" stroke="#ccc" /><rect x=".5" y="6" width="15" height="8" fill="#ddd" /><path d="M2 8.500H14M2 11.500H14" stroke="#555" strokeDasharray="1 1" /></svg></TrayIcon>
          <TrayIcon $gap={13}><svg width="8" height="4"><path d="M0 4L4 0L8 4Z" fill="#fff" /></svg></TrayIcon>
          <TrayIcon $gap={10}><svg width="14" height="16"><path d="M5 2H1.500V14.500H7.500V13" fill="none" stroke="#fff" strokeWidth="1.600" /><rect x="3" y="0" width="3" height="2" fill="#fff" /><path d="M5 6H13V9Q12 12 10 12V15H8V12Q5 12 5 9Z" fill="#fff" /><path d="M7 3V6M11 3V6" stroke="#fff" strokeWidth="1.500" /></svg></TrayIcon>
          <TrayIcon $gap={9}><svg width="16" height="14"><path d="M0 4.500H3L7 1V13L3 9.500H0Z" fill="#fff" /><path d="M9 4.500Q10.500 7 9 9.500M11 3Q13.500 7 11 11M13 1.500Q16.500 7 13 12.500" fill="none" stroke="#fff" /></svg></TrayIcon>
          <TrayIcon $gap={9}><svg width="15" height="12"><path d="M1 12V10M4 12V8.500M7 12V6.500M10 12V4M13 12V1" stroke="#fff" strokeWidth="2" /></svg></TrayIcon>
          <TrayIcon $gap={17}><svg width="15" height="15"><path d="M1.500 0V15" stroke="#fff" strokeWidth="1.500" /><path d="M3 1Q6 0 8 2V8Q6 6.500 3 8ZM8 4Q11 6 14 4L13 9Q10 10 8 8Z" fill="#fff" /></svg></TrayIcon>
          <Clock><div><Text $ls={-0.6}>20:44</Text></div><div><Text $ls={-0.55}>26/05/2016</Text></div></Clock>
          <Peek />
        </Tray>
      </Taskbar>

      <Dialog role="dialog">
        <DlgTitle><Text $ls={-0.45}>Confirme</Text><DlgClose><WhiteX w={14} h={11} /></DlgClose></DlgTitle>
        <DlgBody>
          <Message>
            <svg width="33" height="34" viewBox="0 0 33 34">
              <defs><linearGradient id="q" x2="1" y2="1"><stop stopColor="#4c81dc" /><stop offset=".5" stopColor="#1b46b0" /><stop offset="1" stopColor="#2c50d8" /></linearGradient></defs>
              <circle cx="16.500" cy="17" r="15.500" fill="#f1f3f5" stroke="#888f96" strokeWidth=".9" /><circle cx="16.500" cy="17" r="13.700" fill="url(#q)" stroke="#254a9c" strokeWidth=".6" />
              <text x="16.500" y="26" textAnchor="middle" fontFamily="Noto Sans" fontWeight="700" fontSize="25" fill="#fff">?</text>
            </svg>
            <Text $ls={-0.46}>O caixa está fechado. Deseja abrir o caixa?</Text>
          </Message>
          <DlgButtons>
            <DlgButton $def><Label text="&Sim" ls={0} /></DlgButton>
            <DlgButton><Label text="&Não" ls={-0.2} /></DlgButton>
          </DlgButtons>
        </DlgBody>
      </Dialog>
    </Screen>
  );
}
